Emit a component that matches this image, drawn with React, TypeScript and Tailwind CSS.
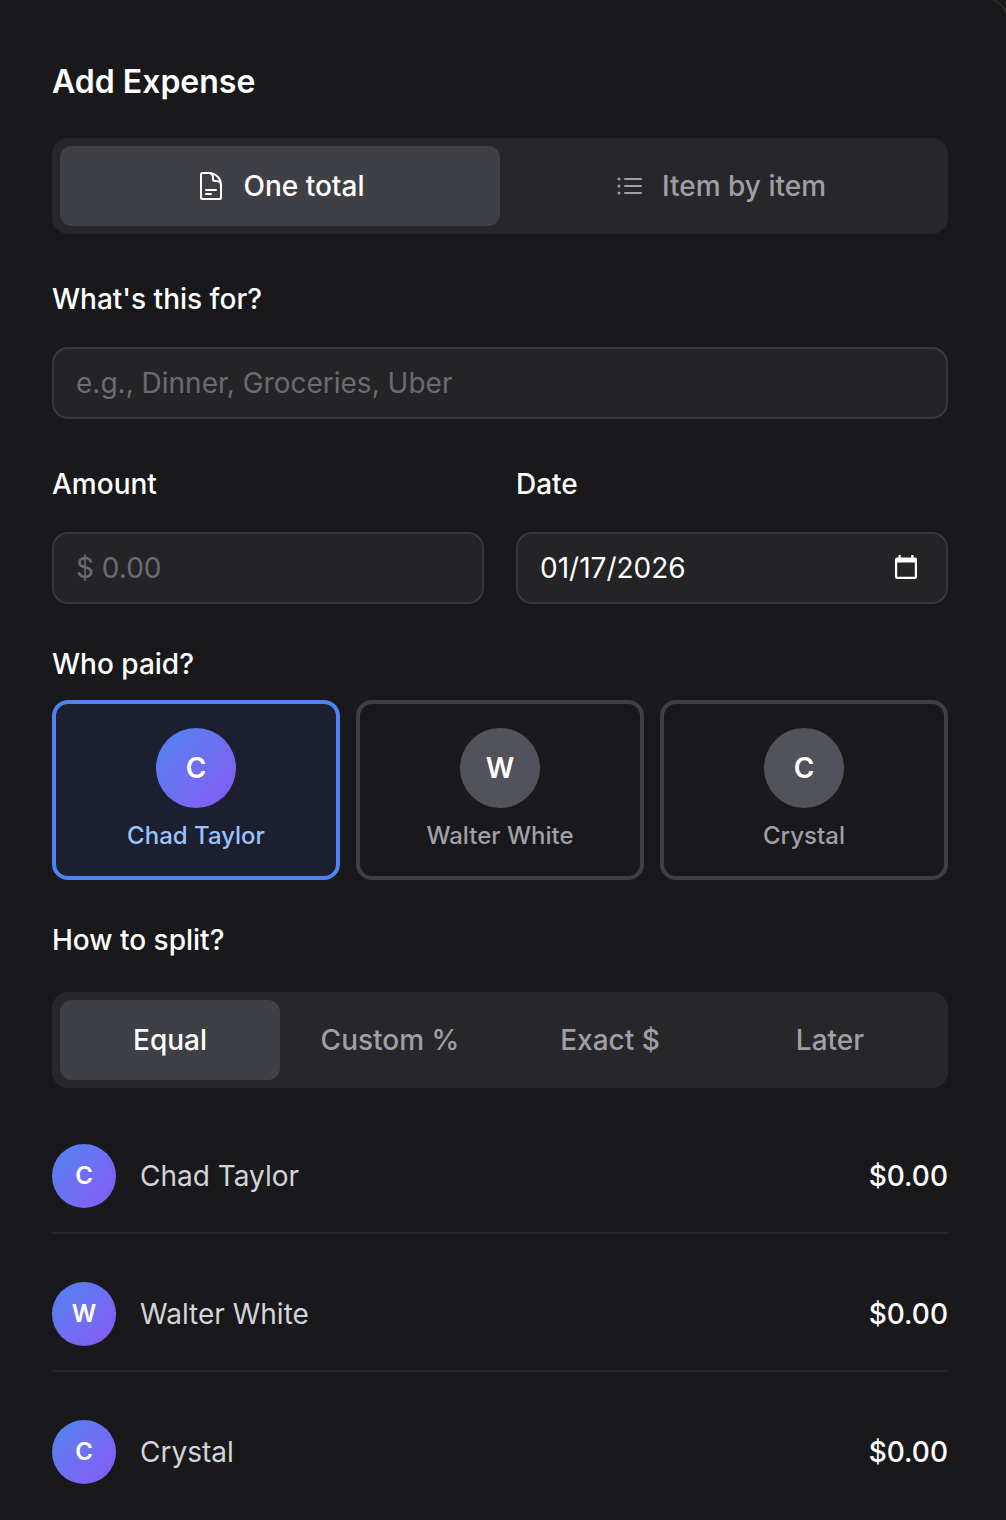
import clsx from 'clsx';
import type { ReactNode } from 'react';

const people = [
  { name: 'Chad Taylor', initial: 'C' },
  { name: 'Walter White', initial: 'W' },
  { name: 'Crystal', initial: 'C' },
];

const splitModes = ['Equal', 'Custom %', 'Exact $', 'Later'];

const DocumentIcon = () => (
  <svg className="size-8" viewBox="0 0 24 24" fill="none" stroke="currentColor" strokeWidth={1.5} strokeLinecap="round" strokeLinejoin="round">
    <path d="M19.5 14.25v-2.625a3.375 3.375 0 0 0-3.375-3.375h-1.5A1.125 1.125 0 0 1 13.5 7.125v-1.5a3.375 3.375 0 0 0-3.375-3.375H8.25m0 12.75h7.5m-7.5 3H12M10.5 2.25H5.625c-.621 0-1.125.504-1.125 1.125v17.25c0 .621.504 1.125 1.125 1.125h12.75c.621 0 1.125-.504 1.125-1.125V11.25a9 9 0 0 0-9-9Z" />
  </svg>
);

const ListIcon = () => (
  <svg className="size-8" viewBox="0 0 24 24" fill="none" stroke="currentColor" strokeWidth={1.5} strokeLinecap="round" strokeLinejoin="round">
    <path d="M8.25 6.75h12M8.25 12h12m-12 5.25h12M3.75 6.75h.007v.008H3.75V6.75Zm.375 0a.375.375 0 1 1-.75 0 .375.375 0 0 1 .75 0ZM3.75 12h.007v.008H3.75V12Zm.375 0a.375.375 0 1 1-.75 0 .375.375 0 0 1 .75 0Zm-.375 5.25h.007v.008H3.75v-.008Zm.375 0a.375.375 0 1 1-.75 0 .375.375 0 0 1 .75 0Z" />
  </svg>
);

const CalendarIcon = () => (
  <svg className="mb-0.5 h-6 w-[22px]" viewBox="0 0 22 24" fill="currentColor">
    <path fillRule="evenodd" d="M3.5 0h2.3v2.4h10.4V0h2.3v2.4H20a2 2 0 0 1 2 2V22a2 2 0 0 1-2 2H2a2 2 0 0 1-2-2V4.400a2 2 0 0 1 2-2h1.500V0ZM2.200 7.500v14.300h17.600V7.500H2.200Z" />
  </svg>
);

const Label = ({ children }: { children: ReactNode }) => (
  <div className="h-10 text-[28px] leading-10 font-medium text-white">{children}</div>
);

const Tab = ({ active, children }: { active?: boolean; children: ReactNode }) => (
  <button
    className={clsx(
      'flex h-20 flex-1 items-center justify-center gap-4 rounded-xl text-[28px] leading-10 font-medium',
      active ? 'bg-[#3f4046] text-white' : 'text-[#9f9fa9]'
    )}
  >
    {children}
  </button>
);

const fieldClass =
  'flex h-18 items-center rounded-2xl border-2 border-[#3a3a3c] bg-[#242426] px-[22px] text-[28px] leading-10';

const App = () => {
  return (
    <div className="relative h-[1520px] overflow-hidden bg-[#19191b] pt-[62px] pr-[58px] pl-[52px] font-[Inter,sans-serif] text-white">
      {/* Rounded panel edge in the top right corner */}
      <div className="absolute -top-1 -right-1 h-12 w-12 rounded-tr-[28px] border-t-2 border-r-2 border-[#2b2b2d]" />

      <h1 className="h-10 text-[32px] leading-10 font-semibold">Add Expense</h1>

      {/* Entry mode */}
      <div className="mt-9 flex rounded-2xl bg-[#272729] p-2">
        <Tab active>
          <DocumentIcon />
          One total
        </Tab>
        <Tab>
          <ListIcon />
          Item by item
        </Tab>
      </div>

      {/* Description */}
      <div className="mt-[45px]">
        <Label>What's this for?</Label>
        <div className={clsx(fieldClass, 'mt-7 text-[#6b6b74]')}>e.g., Dinner, Groceries, Uber</div>
      </div>

      {/* Amount and date */}
      <div className="mt-[45px] grid grid-cols-2 gap-8">
        <div>
          <Label>Amount</Label>
          <div className={clsx(fieldClass, 'mt-7 text-[#6b6b74]')}>$ 0.00</div>
        </div>
        <div>
          <Label>Date</Label>
          <div className={clsx(fieldClass, 'mt-7 justify-between pr-[29px]')}>
            01/17/2026
            <CalendarIcon />
          </div>
        </div>
      </div>

      {/* Payer */}
      <div className="mt-10">
        <Label>Who paid?</Label>
        <div className="mt-4 grid grid-cols-3 gap-4">
          {people.map((person, index) => (
            <button
              key={person.name}
              className={clsx(
                'flex h-[180px] flex-col items-center rounded-2xl border-4 pt-6',
                index === 0 ? 'border-[#4f83f1] bg-[#1c1f2f]' : 'border-[#3f4046]'
              )}
            >
              <span
                className={clsx(
                  'flex size-20 items-center justify-center rounded-full text-[28px] font-semibold',
                  index === 0 ? 'bg-linear-to-br from-[#4b84f0] to-[#8557f4]' : 'bg-[#52525b]'
                )}
              >
                {person.initial}
              </span>
              <span
                className={clsx(
                  'mt-3 text-2xl leading-8 font-medium',
                  index === 0 ? 'text-[#9bc3fb]' : 'text-[#9f9fa9]'
                )}
              >
                {person.name}
              </span>
            </button>
          ))}
        </div>
      </div>

      {/* Split */}
      <div className="mt-10">
        <Label>How to split?</Label>
        <div className="mt-8 flex rounded-2xl bg-[#272729] p-2">
          {splitModes.map((mode, index) => (
            <Tab key={mode} active={index === 0}>
              {mode}
            </Tab>
          ))}
        </div>
      </div>

      <div className="mt-8 flex flex-col gap-6">
        {people.map((person, index) => (
          <div
            key={person.name}
            className={clsx('flex items-center py-6 text-[28px] leading-10', index < 2 && 'border-b-2 border-[#272729]')}
          >
            <span className="flex size-16 items-center justify-center rounded-full bg-linear-to-br from-[#4b84f0] to-[#8557f4] text-2xl font-semibold">
              {person.initial}
            </span>
            <span className="ml-6 text-[#d4d4d8]">{person.name}</span>
            <span className="ml-auto font-medium">$0.00</span>
          </div>
        ))}
      </div>
    </div>
  );
};

export default App;
